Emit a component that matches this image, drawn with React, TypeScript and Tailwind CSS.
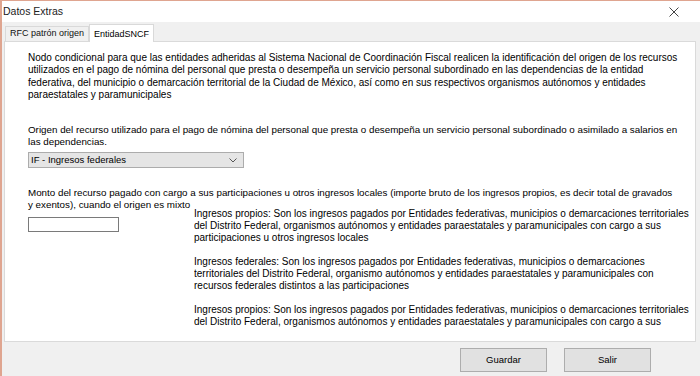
import React from "react";

const F = { fontFamily: '"Liberation Sans", Arial, sans-serif' };

function Lines({
  lines,
  className,
  lh,
}: {
  lines: string[];
  className?: string;
  lh: "a" | "b";
}) {
  const rowCls =
    lh === "a"
      ? "whitespace-nowrap h-[12.4px] leading-[12.4px]"
      : "whitespace-nowrap h-[12px] leading-[12px]";
  return (
    <div className={className}>
      {lines.map((l, i) => (
        <div key={i} className={rowCls}>
          {l === "" ? "\u00a0" : l}
        </div>
      ))}
    </div>
  );
}

export default function App() {
  return (
    <div
      className="w-[700px] h-[376px] bg-[#f0f0f0] border-l-2 border-t border-[#dfa590] flex flex-col overflow-hidden text-black"
      style={F}
    >
      <div className="h-[21px] bg-white flex items-center justify-between pl-[1px] pr-[21px] shrink-0">
        <span className="text-[10.5px] text-[#222]">Datos Extras</span>
        <svg width="10" height="10" viewBox="0 0 10 10" className="mt-[1px]">
          <path d="M0.5 0.5 L9.5 9.5 M9.5 0.5 L0.5 9.5" stroke="#444" strokeWidth="1" />
        </svg>
      </div>
      <div className="pl-[2px] pr-[2px] pt-[2px] shrink-0">
        <div className="flex items-end h-[17px] text-[9px]">
          <div className="ml-[1px] h-[15px] px-[4px] flex items-center bg-[#f0f0f0] border border-b-0 border-[#d9d9d9] text-[#111]">
            RFC patrón origen
          </div>
          <div className="h-[18px] -mb-[1px] px-[4px] flex items-start pt-[3px] bg-white border border-b-0 border-[#d9d9d9] relative z-10">
            EntidadSNCF
          </div>
        </div>
        <div className="w-[692px] h-[301px] bg-white border border-[#dadada] text-[9.8px] pl-[23px] pt-[10px] overflow-hidden">
          <Lines
            lh="a"
            className="text-[10px]"
            lines={[
              "Nodo condicional para que las entidades adheridas al Sistema Nacional de Coordinación Fiscal realicen la identificación del origen de los recursos",
              "utilizados en el pago de nómina del personal que presta o desempeña un servicio personal subordinado en las dependencias de la entidad",
              "federativa, del municipio o demarcación territorial de la Ciudad de México, así como en sus respectivos organismos autónomos y entidades",
              "paraestatales y paramunicipales",
            ]}
          />
          <Lines
            lh="a"
            className="mt-[22px]"
            lines={[
              "Origen del recurso utilizado para el pago de nómina del personal que presta o desempeña un servicio personal subordinado o asimilado a salarios en",
              "las dependencias.",
            ]}
          />
          <div className="mt-[4px] w-[216px] h-[16px] bg-[#e5e5e5] border border-[#acacac] flex items-center justify-between pl-[2px] pr-[6px] text-[9.5px]">
            <span>IF - Ingresos federales</span>
            <svg width="8" height="5" viewBox="0 0 8 5">
              <path d="M0.5 0.5 L4 4 L7.5 0.5" stroke="#555" strokeWidth="1" fill="none" />
            </svg>
          </div>
          <Lines
            lh="b"
            className="mt-[19px]"
            lines={[
              "Monto del recurso pagado con cargo a sus participaciones u otros ingresos locales (importe bruto de los ingresos propios, es decir total de gravados",
              "y exentos), cuando el origen es mixto",
            ]}
          />
          <div className="flex">
            <div className="w-[91px] h-[15px] mt-[6px] border border-[#7a7a7a] bg-white shrink-0" />
            <div className="ml-[75px] -mt-[3px] h-[120px] overflow-hidden text-[10px]">
              <Lines
                lh="b"
                lines={[
                  "Ingresos propios: Son los ingresos pagados por Entidades federativas, municipios o demarcaciones territoriales",
                  "del Distrito Federal, organismos autónomos y entidades paraestatales y paramunicipales con cargo a sus",
                  "participaciones u otros ingresos locales",
                  "",
                  "Ingresos federales: Son los ingresos pagados por Entidades federativas, municipios o demarcaciones",
                  "territoriales del Distrito Federal, organismo autónomos y entidades paraestatales y paramunicipales con",
                  "recursos federales distintos a las participaciones",
                  "",
                  "Ingresos propios: Son los ingresos pagados por Entidades federativas, municipios o demarcaciones territoriales",
                  "del Distrito Federal, organismos autónomos y entidades paraestatales y paramunicipales con cargo a sus",
                ]}
              />
            </div>
          </div>
        </div>
      </div>
      <div className="flex justify-end gap-[17px] pr-[49px] pt-[6px] text-[9.5px]">
        <button className="w-[87px] h-[24px] bg-[#e1e1e1] border border-[#adadad]">Guardar</button>
        <button className="w-[87px] h-[24px] bg-[#e1e1e1] border border-[#adadad]">Salir</button>
      </div>
    </div>
  );
}
